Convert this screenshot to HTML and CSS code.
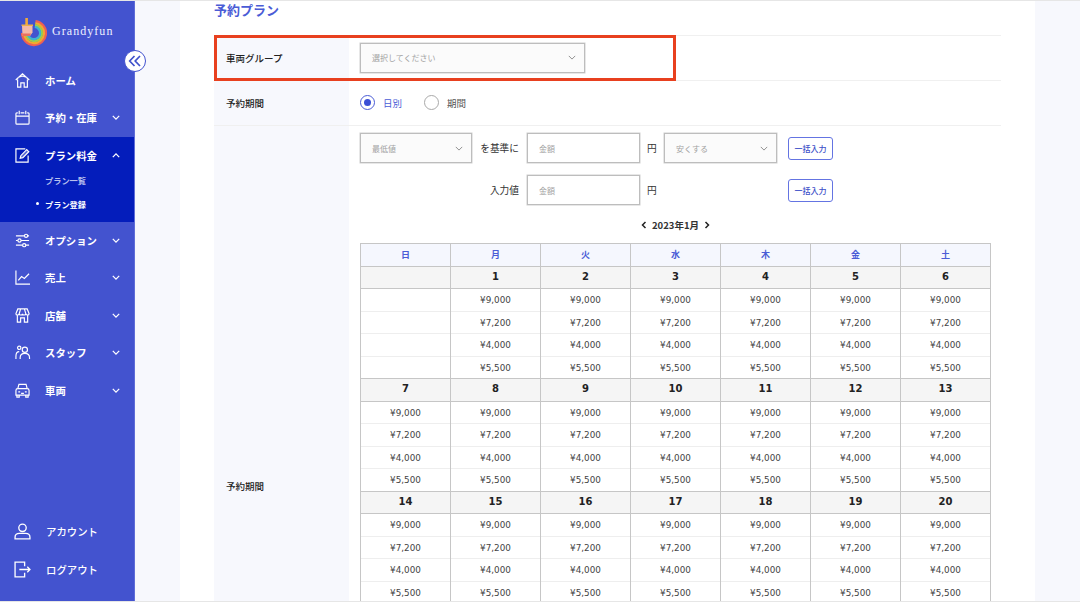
FILE: index.html
```html
<!DOCTYPE html>
<html lang="ja">
<head>
<meta charset="utf-8">
<title>予約プラン</title>
<link rel="stylesheet" href="styles.css">
</head>
<body>
<div class="app">
  <aside class="sidebar">
    <div class="logo">
      <svg class="logo-mark" width="26" height="30" viewBox="0 0 26 30" fill="none" stroke-width="2.3">
        <path d="M14.500 3.100A12 12 0 1 1 1 15" stroke="#ee5f55"/>
        <path d="M14.300 5.100A10 10 0 1 1 3 15" stroke="#f6a72e"/>
        <path d="M14 7.100A8 8 0 1 1 5 15" stroke="#a4cf45"/>
        <path d="M13.800 8.900A6.200 6.200 0 1 1 6.800 15" stroke="#3fb4d0"/>
        <path d="M1 8h10.500v6.500L9 18H1.500z" fill="#f4b9a8"/>
        <path d="M1 15.500h9L9 18H1.500z" fill="#e8705f"/>
        <path d="M4.300 0h2.600v7H4.300z" fill="#f0a93a"/>
        <path d="M.5 6.500h11.500V8H.5z" fill="#ecae4a"/>
      </svg>
      <span class="logo-text">Grandyfun</span>
    </div>
    <button class="collapse" type="button" aria-label="閉じる">
      <svg width="14" height="14" viewBox="0 0 14 14" fill="none" stroke="#3f51cc" stroke-width="1.7"><path d="M6.500 2 1.700 7l4.800 5M12 2 7.200 7l4.800 5"/></svg>
    </button>
    <nav class="nav">
      <a class="nav-item"><svg class="ic" viewBox="0 0 16 16"><path d="M.8 7.500 8 .8l7.200 6.700M3 4.800 8 3.200l5 1.600M2.800 7v8h3.400v-4.500h3.600V15h3.400V7"/></svg><span>ホーム</span></a>
      <a class="nav-item"><svg class="ic" viewBox="0 0 16 16"><path d="M3 3H2a1 1 0 0 0-1 1v10a1 1 0 0 0 1 1h12a1 1 0 0 0 1-1V4a1 1 0 0 0-1-1h-1M6 3h4M1 6.500h14M4.500 .8v3.700M11.500 .8v3.700"/></svg><span>予約・在庫</span><svg class="chev" viewBox="0 0 10 6"><path d="M1 1l4 4 4-4"/></svg></a>
      <div class="nav-group">
        <a class="nav-item"><svg class="ic" viewBox="0 0 16 16"><path d="M14 8v7H1V1h10"/><path class="ic-fill" d="M5.500 11l.7-2.800L12.500 1.800l2.200 2.200-6.300 6.300z"/></svg><span>プラン料金</span><svg class="chev" viewBox="0 0 10 6"><path d="M1 5l4-4 4 4"/></svg></a>
        <a class="sub-item sub-item-first">プラン一覧</a>
        <a class="sub-item is-current">プラン登録</a>
      </div>
      <a class="nav-item"><svg class="ic" viewBox="0 0 16 16"><path d="M1 3h9M13.500 3H15M1 8h2M6.500 8H15M1 13h7M11.500 13H15"/><circle cx="11.800" cy="3" r="1.700"/><circle cx="4.800" cy="8" r="1.700"/><circle cx="9.800" cy="13" r="1.700"/></svg><span>オプション</span><svg class="chev" viewBox="0 0 10 6"><path d="M1 1l4 4 4-4"/></svg></a>
      <a class="nav-item"><svg class="ic" viewBox="0 0 16 16"><path d="M1 .5V15h15M3.500 11l3.500-4 3 2 5-5"/></svg><span>売上</span><svg class="chev" viewBox="0 0 10 6"><path d="M1 1l4 4 4-4"/></svg></a>
      <a class="nav-item"><svg class="ic" viewBox="0 0 16 16"><path d="M3 1h10l2 5c0 2-3 2-3.500 0 0 2-3.500 2-3.500 0 0 2-3.500 2-3.500 0C4 8 1 8 1 6zM2.500 8v7h3.500v-4.500h4V15h3.500V8M6 1 4.500 6M10 1l1.500 5"/></svg><span>店舗</span><svg class="chev" viewBox="0 0 10 6"><path d="M1 1l4 4 4-4"/></svg></a>
      <a class="nav-item"><svg class="ic" viewBox="0 0 16 16"><circle cx="4.500" cy="3" r="1.800"/><circle cx="10.500" cy="5" r="2.800"/><path d="M1 15v-3c0-3 1-5 3.500-5M5.500 15v-1.500c0-3 2-4.500 5-4.500s5 1.500 5 4.500V15"/></svg><span>スタッフ</span><svg class="chev" viewBox="0 0 10 6"><path d="M1 1l4 4 4-4"/></svg></a>
      <a class="nav-item"><svg class="ic" viewBox="0 0 16 16"><path d="M3 6l1.200-4.500h7.600L13 6M1 8c0-1.500 1-2 2-2h10c1 0 2 .5 2 2v5H1zM2 13v2h2.500v-2M11.500 13v2H14v-2M3.500 9.500h2M10.500 9.500h2M6.500 11h3"/></svg><span>車両</span><svg class="chev" viewBox="0 0 10 6"><path d="M1 1l4 4 4-4"/></svg></a>
    </nav>
    <div class="nav-bottom">
      <a class="nav-item"><svg class="ic" viewBox="0 0 16 16"><circle cx="8" cy="4.500" r="3.500"/><path d="M1 15v-1.500C1 11 3 9.800 5 9.800h6c2 0 4 1.200 4 3.700V15z"/></svg><span>アカウント</span></a>
      <a class="nav-item"><svg class="ic" viewBox="0 0 16 16"><path d="M10 5V1H1v14h9v-4M5 8h10M12.500 5.500 15 8l-2.500 2.500"/></svg><span>ログアウト</span></a>
    </div>
  </aside>

  <main class="main">
    <section class="card">
      <h1 class="title">予約プラン</h1>
      <div class="form-row form-row-short">
        <div class="label label-raised">車両グループ</div>
        <div class="field field-raised">
          <div class="select select-wide"><span>選択してください</span><svg class="sel-chev" viewBox="0 0 10 6"><path d="M1 1l4 4 4-4"/></svg></div>
        </div>
      </div>
      <div class="form-row form-row-short">
        <div class="label">予約期間</div>
        <div class="field field-raised radios">
          <span class="radio is-on"></span><span class="radio-text is-on-text">日別</span>
          <span class="radio"></span><span class="radio-text">期間</span>
        </div>
      </div>
      <div class="form-row">
        <div class="label">予約期間</div>
        <div class="field field-long">
          <div class="bulk">
            <div class="select"><span>最低値</span><svg class="sel-chev" viewBox="0 0 10 6"><path d="M1 1l4 4 4-4"/></svg></div>
            <span class="bulk-text">を基準に</span>
            <div class="input">金額</div>
            <span class="yen">円</span>
            <div class="select"><span>安くする</span><svg class="sel-chev" viewBox="0 0 10 6"><path d="M1 1l4 4 4-4"/></svg></div>
            <button class="btn" type="button">一括入力</button>
            <span class="bulk-text bulk-text-second">入力値</span>
            <div class="input">金額</div>
            <span class="yen">円</span>
            <button class="btn btn-second" type="button">一括入力</button>
          </div>
          <div class="month">
            <svg class="month-arrow" viewBox="0 0 6 8"><path d="M4.500 1 1.500 4l3 3"/></svg>
            <span>2023年1月</span>
            <svg class="month-arrow" viewBox="0 0 6 8"><path d="M1.500 1l3 3-3 3"/></svg>
          </div>
          <table class="cal">
            <thead><tr><th>日</th><th>月</th><th>火</th><th>水</th><th>木</th><th>金</th><th>土</th></tr></thead>
            <tbody>
              <tr class="day"><td></td><td>1</td><td>2</td><td>3</td><td>4</td><td>5</td><td>6</td></tr>
              <tr><td></td><td>¥9,000</td><td>¥9,000</td><td>¥9,000</td><td>¥9,000</td><td>¥9,000</td><td>¥9,000</td></tr>
              <tr><td></td><td>¥7,200</td><td>¥7,200</td><td>¥7,200</td><td>¥7,200</td><td>¥7,200</td><td>¥7,200</td></tr>
              <tr><td></td><td>¥4,000</td><td>¥4,000</td><td>¥4,000</td><td>¥4,000</td><td>¥4,000</td><td>¥4,000</td></tr>
              <tr><td></td><td>¥5,500</td><td>¥5,500</td><td>¥5,500</td><td>¥5,500</td><td>¥5,500</td><td>¥5,500</td></tr>
              <tr class="day"><td>7</td><td>8</td><td>9</td><td>10</td><td>11</td><td>12</td><td>13</td></tr>
              <tr><td>¥9,000</td><td>¥9,000</td><td>¥9,000</td><td>¥9,000</td><td>¥9,000</td><td>¥9,000</td><td>¥9,000</td></tr>
              <tr><td>¥7,200</td><td>¥7,200</td><td>¥7,200</td><td>¥7,200</td><td>¥7,200</td><td>¥7,200</td><td>¥7,200</td></tr>
              <tr><td>¥4,000</td><td>¥4,000</td><td>¥4,000</td><td>¥4,000</td><td>¥4,000</td><td>¥4,000</td><td>¥4,000</td></tr>
              <tr><td>¥5,500</td><td>¥5,500</td><td>¥5,500</td><td>¥5,500</td><td>¥5,500</td><td>¥5,500</td><td>¥5,500</td></tr>
              <tr class="day"><td>14</td><td>15</td><td>16</td><td>17</td><td>18</td><td>19</td><td>20</td></tr>
              <tr><td>¥9,000</td><td>¥9,000</td><td>¥9,000</td><td>¥9,000</td><td>¥9,000</td><td>¥9,000</td><td>¥9,000</td></tr>
              <tr><td>¥7,200</td><td>¥7,200</td><td>¥7,200</td><td>¥7,200</td><td>¥7,200</td><td>¥7,200</td><td>¥7,200</td></tr>
              <tr><td>¥4,000</td><td>¥4,000</td><td>¥4,000</td><td>¥4,000</td><td>¥4,000</td><td>¥4,000</td><td>¥4,000</td></tr>
              <tr><td>¥5,500</td><td>¥5,500</td><td>¥5,500</td><td>¥5,500</td><td>¥5,500</td><td>¥5,500</td><td>¥5,500</td></tr>
            </tbody>
          </table>
        </div>
      </div>
      <div class="highlight"></div>
    </section>
  </main>
</div>
</body>
</html>
```
FILE: styles.css
```css
* { box-sizing: border-box; }
html, body { margin: 0; padding: 0; background: #fff; overflow: hidden; }
body { font-family: "Noto Sans CJK JP", "Noto Sans", sans-serif; color: #222; }

.app {
  display: flex;
  width: 1080px;
  height: 602px;
  overflow: hidden;
  border-top: 1px solid #e6e6e6;
  border-bottom: 1px solid #e6e6e6;
  background: #f7f8fd;
}

/* Sidebar */
.sidebar {
  position: relative;
  flex: 0 0 135px;
  display: flex;
  flex-direction: column;
  background: #4353cf;
  border-right: 1px solid #5f6dd8;
  color: #fff;
}
.logo { display: flex; align-items: center; height: 61px; padding: 0 0 0 21px; gap: 5px; }
.logo-mark { flex: none; margin-top: 2px; }
.logo-text {
  font-family: "Liberation Serif", serif;
  font-size: 12px;
  letter-spacing: 1.05px;
  color: #eef0ff;
}
.collapse {
  position: absolute;
  left: 124px;
  top: 49px;
  width: 22px;
  height: 22px;
  display: flex;
  align-items: center;
  justify-content: center;
  padding: 0;
  border: 1px solid #4353cf;
  border-radius: 50%;
  background: #fff;
  z-index: 2;
}
.nav-item {
  display: flex;
  align-items: center;
  height: 37.5px;
  padding: 0 14px 1px 15px;
  font-size: 10.4px;
  font-weight: 700;
  color: #fff;
  text-decoration: none;
}
.nav-item > span { flex: 1; padding-left: 15px; }
.ic {
  flex: none;
  width: 15px;
  height: 15px;
  fill: none;
  stroke: #fff;
  stroke-width: 1.25;
  overflow: visible;
}
.ic-fill { fill: #fff; fill-opacity: .35; }
.chev {
  flex: none;
  width: 8px;
  height: 5px;
  fill: none;
  stroke: #fff;
  stroke-width: 1.6;
}
.nav-group {
  height: 85px;
  background: #041dbb;
}
.sub-item {
  display: block;
  height: 24px;
  padding-left: 45px;
  font-size: 8.2px;
  font-weight: 700;
  line-height: 24px;
  color: #b9c0ee;
}
.sub-item-first { margin-top: -7px; }
.sub-item.is-current { position: relative; color: #fff; }
.sub-item.is-current::before {
  content: "";
  position: absolute;
  left: 36px;
  top: 10px;
  width: 3px;
  height: 3px;
  border-radius: 50%;
  background: #fff;
}
.nav-bottom { margin-top: auto; padding-bottom: 12px; }
.nav-bottom .nav-item { height: 38px; padding-left: 14px; font-weight: 500; }
.nav-bottom .ic { width: 17px; height: 17px; }
.nav-bottom .nav-item > span { padding-left: 15px; }

/* Main */
.main { flex: 1; padding: 0 45px; overflow: hidden; }
.card { position: relative; background: #fff; padding: 0 34px; min-height: 900px; }
.title {
  margin: 0;
  height: 34px;
  font-size: 13px;
  font-weight: 700;
  line-height: 18px;
  color: #4a5cd6;
}
.form-row { display: flex; border-top: 1.5px solid #f0f0f0; }
.form-row-short { height: 45px; }
.label {
  flex: 0 0 135px;
  display: flex;
  align-items: center;
  padding-left: 12px;
  background: #f7f8fd;
  font-size: 9.5px;
  font-weight: 500;
  color: #222;
}
.label-raised { padding-bottom: 1px; }
.field {
  flex: 1;
  display: flex;
  align-items: center;
  padding-left: 11px;
}
.field-raised { padding-bottom: 1px; }
.field-long { display: block; padding-top: 7px; padding-bottom: 242px; }

.select, .input {
  display: flex;
  align-items: center;
  height: 30px;
  padding: 0 8px 0 11px;
  border: 1px solid #bdbdbd;
  box-shadow: 0 0 0 .5px #cfcfcf;
  font-size: 8px;
  color: #a2a2a2;
  background: #fff;
}
.select { justify-content: space-between; background: #fbfbfb; }
.select-wide { width: 225px; }
.sel-chev { width: 8px; height: 5px; fill: none; stroke: #8d8d8d; stroke-width: 1.2; }

.radios { font-size: 9.5px; }
.radio {
  width: 15px;
  height: 15px;
  border: 1px solid #a9a9a9;
  border-radius: 50%;
  background: #fff;
}
.radio.is-on { position: relative; border-color: #4a5cd6; }
.radio.is-on::after {
  content: "";
  position: absolute;
  left: 3px;
  top: 3px;
  width: 7px;
  height: 7px;
  border-radius: 50%;
  background: #3a4fd6;
}
.radio-text { margin: 0 22px 0 8px; color: #555; }
.radio-text.is-on-text { color: #4a5cd6; }

.bulk {
  display: grid;
  grid-template-columns: 112px 55px 113px 24px 113px 56px;
  grid-template-rows: 30px 30px;
  row-gap: 12px;
  align-items: center;
  font-size: 9.7px;
}
.bulk-text { justify-self: end; padding-right: 8px; color: #333; }
.bulk-text-second { grid-column: 2; }
.yen { justify-self: start; padding-left: 7px; color: #333; }
.btn {
  justify-self: end;
  width: 45px;
  height: 23px;
  padding: 0;
  border: 1px solid #6474e2;
  border-radius: 3px;
  background: #fff;
  font-family: inherit;
  font-size: 8px;
  font-weight: 500;
  color: #3d4fc8;
}
.btn-second { grid-column: 6; }
.month {
  display: flex;
  align-items: center;
  justify-content: center;
  gap: 5px;
  width: 631px;
  height: 38px;
  padding-top: 1px;
  font-size: 9.5px;
  font-weight: 700;
  color: #333;
}
.month-arrow { width: 6px; height: 8px; fill: none; stroke: #222; stroke-width: 1.5; }

/* Calendar */
.cal {
  width: 631px;
  table-layout: fixed;
  border-collapse: collapse;
  font-family: "DejaVu Sans", sans-serif;
  font-size: 8.8px;
  color: #444;
}
.cal th, .cal td {
  height: 22.5px;
  padding: 1px 0 0;
  text-align: center;
  border-left: 1px solid #c6c6c6;
  border-right: 1px solid #c6c6c6;
  border-top: 1px solid #eeeeee;
}
.cal th {
  padding: 0;
  border-top: 1px solid #c6c6c6;
  border-bottom: 1px solid #c6c6c6;
  background: #f5f7fe;
  font-family: "Noto Sans CJK JP", sans-serif;
  font-size: 9px;
  font-weight: 700;
  color: #4a5cd6;
}
.cal .day td {
  padding: 0 0 2px;
  border-top: 1px solid #c6c6c6;
  border-bottom: 1px solid #c6c6c6;
  background: #f5f5f5;
  font-size: 10px;
  font-weight: 700;
  color: #222;
}

.highlight {
  position: absolute;
  left: 34px;
  top: 34px;
  width: 462px;
  height: 46px;
  border: 3px solid #e8401f;
  pointer-events: none;
}
```
